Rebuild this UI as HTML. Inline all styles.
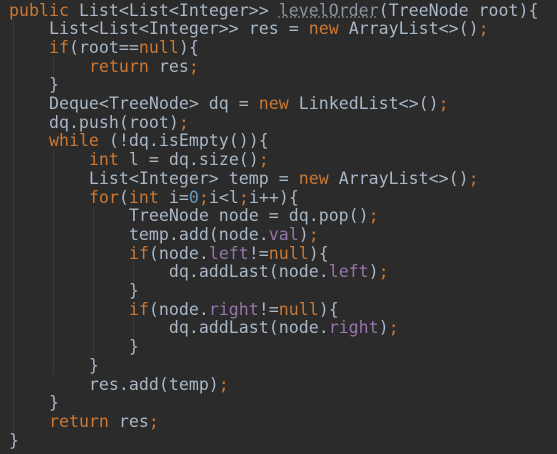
<!DOCTYPE html><html><head><style>
body{margin:0;width:557px;height:454px;background:#2b2b2b;overflow:hidden;position:relative}
.c{position:absolute;left:9px;top:0;font-family:"DejaVu Sans Mono",monospace;font-size:16.6px;color:#a9b7c6;margin:0}
.c div{position:absolute;left:0;white-space:pre;height:19px;line-height:19px}
.k{color:#cc7832}.f{color:#9876aa}.u{color:#a9b7c6;opacity:.75;text-decoration:underline dotted #888}
.g{position:absolute;width:1px;background:#3b3b3b}
</style></head><body>
<div class="g" style="left:13px;top:19px;height:412px"></div>
<div class="g" style="left:53px;top:57px;height:19px"></div>
<div class="g" style="left:53px;top:150px;height:224px"></div>
<div class="g" style="left:93px;top:206px;height:150px"></div>
<div class="g" style="left:133px;top:262px;height:19px"></div>
<div class="g" style="left:133px;top:318px;height:19px"></div>
<div class="c">
<div style="top:0.5px"><span class="k">public</span> List&lt;List&lt;Integer&gt;&gt; <span class="u">levelOrder</span>(TreeNode root){</div>
<div style="top:19.2px">    List&lt;List&lt;Integer&gt;&gt; res = <span class="k">new</span> ArrayList&lt;&gt;()<span class="k">;</span></div>
<div style="top:37.9px">    <span class="k">if</span>(root==<span class="k">null</span>){</div>
<div style="top:56.6px">        <span class="k">return</span> res<span class="k">;</span></div>
<div style="top:75.3px">    }</div>
<div style="top:94px">    Deque&lt;TreeNode&gt; dq = <span class="k">new</span> LinkedList&lt;&gt;()<span class="k">;</span></div>
<div style="top:112.7px">    dq.push(root)<span class="k">;</span></div>
<div style="top:131.4px">    <span class="k">while</span> (!dq.isEmpty()){</div>
<div style="top:150.1px">        <span class="k">int</span> l = dq.size()<span class="k">;</span></div>
<div style="top:168.8px">        List&lt;Integer&gt; temp = <span class="k">new</span> ArrayList&lt;&gt;()<span class="k">;</span></div>
<div style="top:187.5px">        <span class="k">for</span>(<span class="k">int</span> i=<span style="color:#6897bb">0</span><span class="k">;</span>i&lt;l<span class="k">;</span>i++){</div>
<div style="top:206.2px">            TreeNode node = dq.pop()<span class="k">;</span></div>
<div style="top:224.9px">            temp.add(node.<span class="f">val</span>)<span class="k">;</span></div>
<div style="top:243.6px">            <span class="k">if</span>(node.<span class="f">left</span>!=<span class="k">null</span>){</div>
<div style="top:262.3px">                dq.addLast(node.<span class="f">left</span>)<span class="k">;</span></div>
<div style="top:281px">            }</div>
<div style="top:299.7px">            <span class="k">if</span>(node.<span class="f">right</span>!=<span class="k">null</span>){</div>
<div style="top:318.4px">                dq.addLast(node.<span class="f">right</span>)<span class="k">;</span></div>
<div style="top:337.1px">            }</div>
<div style="top:355.8px">        }</div>
<div style="top:374.5px">        res.add(temp)<span class="k">;</span></div>
<div style="top:393.2px">    }</div>
<div style="top:411.9px">    <span class="k">return</span> res<span class="k">;</span></div>
<div style="top:430.6px">}</div>
</div>
</body></html>
